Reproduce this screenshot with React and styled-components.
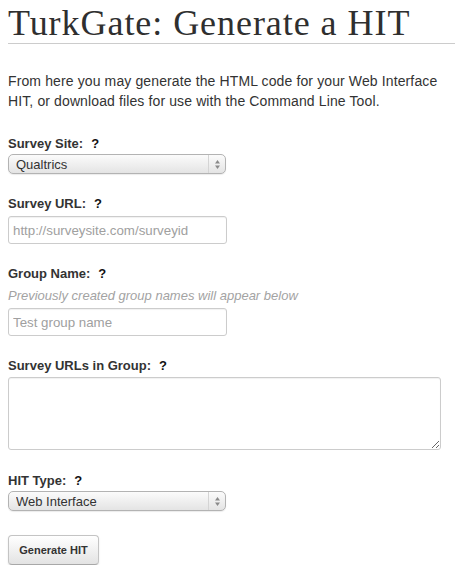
import React from 'react';
import styled, { createGlobalStyle } from 'styled-components';

const GlobalStyle = createGlobalStyle`
  body {
    margin: 0;
    background: #fff;
    font-family: "Liberation Sans", Arial, sans-serif;
    color: #333;
  }
`;

const PageStyle = styled.div`
  padding: 0 0 0 8px;
  overflow: hidden;
`;

const TitleStyle = styled.h1`
  margin: 3px 0 0 0;
  font-family: "Liberation Serif", "Times New Roman", serif;
  font-weight: normal;
  font-size: 36px;
  line-height: 40px;
  letter-spacing: 0.95px;
  color: #2f2f2f;
  border-bottom: 1px solid #cccccc;
  white-space: nowrap;
`;

const IntroStyle = styled.p`
  margin: 27px 0 0 0;
  font-size: 14px;
  line-height: 20px;
  letter-spacing: 0.12px;
  color: #333;
`;

const FieldStyle = styled.div`
  margin-top: ${(p) => p.$top || 21}px;
`;

const LabelStyle = styled.label`
  display: block;
  font-size: 13px;
  line-height: 18px;
  font-weight: bold;
  color: #333;
  margin-bottom: ${(p) => p.$gap || 2}px;
  .help {
    margin-left: 8px;
    color: #111;
  }
`;

const HintStyle = styled.div`
  font-size: 13px;
  line-height: 18px;
  font-style: italic;
  color: #a3a3a3;
  margin-bottom: 3px;
`;

const SelectBox = styled.div`
  display: flex;
  width: 218px;
  height: 20px;
  box-sizing: border-box;
  border: 1px solid #b3b3b3;
  border-radius: 5px;
  background: linear-gradient(#fbfbfb, #e4e4e4);
  box-shadow: 0 1px 1px rgba(0, 0, 0, 0.08);
  select {
    flex: 1;
    appearance: none;
    border: 0;
    background: transparent;
    font-family: inherit;
    font-size: 13px;
    color: #333;
    padding: 0 0 0 7px;
    outline: none;
  }
`;

const ArrowsStyle = styled.div`
  width: 16px;
  border-left: 1px solid #d4d4d4;
  display: flex;
  align-items: center;
  justify-content: center;
`;

const InputStyle = styled.input`
  display: block;
  box-sizing: border-box;
  width: 219px;
  height: 28px;
  padding: 4px 4px;
  border: 1px solid #cccccc;
  border-radius: 3px;
  font-family: inherit;
  font-size: 13.3px;
  color: #555;
  caret-color: #222;
  outline: none;
  box-shadow: inset 0 1px 1px rgba(0, 0, 0, 0.06);
  &::placeholder {
    color: #a0a0a0;
  }
`;

const TextAreaStyle = styled.textarea`
  display: block;
  box-sizing: border-box;
  width: 433px;
  height: 73px;
  border: 1px solid #cccccc;
  border-radius: 3px;
  box-shadow: inset 0 1px 1px rgba(0, 0, 0, 0.06);
  font-family: inherit;
  font-size: 13px;
`;

const ButtonStyle = styled.button`
  display: block;
  margin-top: 24px;
  width: 91px;
  height: 30px;
  border: 1px solid #c4c4c4;
  border-bottom-color: #a8a8a8;
  border-radius: 4px;
  background: linear-gradient(#ffffff, #e3e3e3);
  box-shadow: 0 1px 2px rgba(0, 0, 0, 0.1);
  font-family: inherit;
  font-weight: bold;
  font-size: 11px;
  color: #333;
  padding: 0;
`;

const Arrows = () => (
  <ArrowsStyle>
    <svg width='7' height='11' viewBox='0 0 7 11'>
      <path d='M3.5 1 L6 4.5 H1 Z' fill='#8a8a8a' />
      <path d='M3.5 10 L6 6.5 H1 Z' fill='#8a8a8a' />
    </svg>
  </ArrowsStyle>
);

const Select = ({ value }) => (
  <SelectBox>
    <select defaultValue={value}>
      <option>{value}</option>
    </select>
    <Arrows />
  </SelectBox>
);

const Label = ({ children, gap }) => (
  <LabelStyle $gap={gap}>
    {children}
    <span className='help'>?</span>
  </LabelStyle>
);

const App = () => {
  return (
    <PageStyle>
      <GlobalStyle />
      <TitleStyle>TurkGate: Generate a HIT</TitleStyle>
      <IntroStyle>
        From here you may generate the HTML code for your Web Interface HIT, or
        download files for use with the Command Line Tool.
      </IntroStyle>
      <FieldStyle $top={24}>
        <Label gap={1}>Survey Site:</Label>
        <Select value='Qualtrics' />
      </FieldStyle>
      <FieldStyle>
        <Label gap={3}>Survey URL:</Label>
        <InputStyle autoFocus placeholder='http://surveysite.com/surveyid' />
      </FieldStyle>
      <FieldStyle>
        <Label gap={4}>Group Name:</Label>
        <HintStyle>Previously created group names will appear below</HintStyle>
        <InputStyle placeholder='Test group name' />
      </FieldStyle>
      <FieldStyle>
        <Label gap={2}>Survey URLs in Group:</Label>
        <TextAreaStyle />
      </FieldStyle>
      <FieldStyle $top={22}>
        <Label gap={1}>HIT Type:</Label>
        <Select value='Web Interface' />
      </FieldStyle>
      <ButtonStyle>Generate HIT</ButtonStyle>
    </PageStyle>
  );
};

export default App;
